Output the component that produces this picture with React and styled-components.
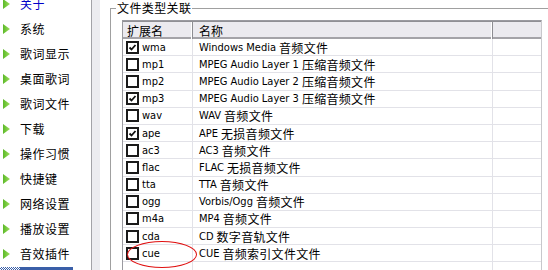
import React from "react";
import styled, { createGlobalStyle } from "styled-components";

const Global = createGlobalStyle`
  html, body { margin: 0; padding: 0; background: #fff; }
  body { font-family: "Liberation Sans", "Noto Sans CJK SC", sans-serif; font-size: 12px; color: #000; }
`;

const Page = styled.div`
  display: flex;
  width: 548px;
  height: 270px;
  overflow: hidden;
  position: relative;
`;

const Nav = styled.div`
  width: 91px;
  flex: none;
  background: #fff;
  border-right: 1px solid #a3a3a8;
  overflow: hidden;
`;

const NavList = styled.ul`
  list-style: none;
  margin: -9px 0 0 0;
  padding: 0;
`;

const NavItem = styled.li`
  display: flex;
  align-items: center;
  height: 25px;
  gap: 10px;
  padding-left: 3px;
  color: ${(p) => (p.$active ? "#0000c8" : "#000")};
  font-family: "Noto Sans CJK SC", sans-serif;
  font-size: 12px;
  letter-spacing: 0.5px;
`;

const SelectedRow = styled.li`
  display: flex;
  height: 25px;
  margin-top: 0.5px;
`;

const Dither = styled.div`
  width: 20px;
  background-color: #fff;
  background-image: repeating-conic-gradient(#3a5fa8 0 25%, #fff 0 50%);
  background-size: 2px 2px;
`;

const BlueBar = styled.div`
  width: 53px;
  background: #3a5fa8;
`;

const Strip = styled.div`
  width: 8px;
  flex: none;
  background: #ececf0;
`;

const Main = styled.div`
  flex: 1;
  background: #fff;
  padding-left: 10px;
`;

const Group = styled.fieldset`
  margin: 1px 0 0 0;
  padding: 0;
  border: none;
  border-top: 1px solid #a0a0a0;
  border-left: 1px solid #a0a0a0;
  min-width: 0;
  height: 300px;
`;

const Legend = styled.legend`
  margin-left: 5px;
  padding: 0 1px;
  font-family: "Noto Sans CJK SC", sans-serif;
  font-size: 12px;
  line-height: 14px;
  letter-spacing: 0.4px;
`;

const Table = styled.div`
  margin: 5px 0 0 11px;
  width: 418px;
  border-left: 1px solid #9a9aa0;
  border-right: 1px solid #c8c8cc;
  border-top: 1px solid #9a9aa0;
`;

const Header = styled.div`
  display: grid;
  grid-template-columns: 70px 300px 46px;
  height: 15px;
  background: #ebeaef;
  border-top: 1px solid #8f8f94;
  border-bottom: 2px solid #a4a3a8;
`;

const HeadCell = styled.div`
  display: flex;
  align-items: center;
  padding-left: ${(p) => p.$pad || 4}px;
  font-family: "Noto Sans CJK SC", sans-serif;
  font-size: 12px;
  border-right: 1px solid #8d8d92;
  box-shadow: inset -1px 0 0 #fff;
  &:last-child { border-right: none; box-shadow: none; }
`;

const Row = styled.div`
  display: grid;
  grid-template-columns: 70px 300px 46px;
  height: 17.2px;
  box-sizing: border-box;
  border-bottom: 1px solid #e2e2e8;
`;

const Cell = styled.div`
  display: flex;
  align-items: center;
  gap: 3px;
  padding-left: ${(p) => p.$pad || 0}px;
  border-right: 1px solid #e2e2e8;
  font-size: 11px;
  font-family: "DejaVu Sans Condensed", "DejaVu Sans", "Noto Sans CJK SC", sans-serif;
  white-space: nowrap;
  overflow: hidden;
  &:last-child { border-right: none; }
`;

const CnText = styled.span`
  font-family: "Noto Sans CJK SC", sans-serif;
  font-size: 12px;
  letter-spacing: 0.3px;
`;

const Box = styled.span`
  width: 13px;
  height: 13px;
  box-sizing: border-box;
  border: 2px solid #1a1a1a;
  background: #fff;
  display: inline-flex;
  align-items: center;
  justify-content: center;
  flex: none;
`;

const Ellipse = styled.div`
  position: absolute;
  left: 127px;
  top: 241px;
  width: 70px;
  height: 27px;
  border: 1px solid #e01010;
  border-radius: 50%;
  box-sizing: border-box;
  pointer-events: none;
`;

const Arrow = () => (
  <svg width="7" height="10" viewBox="0 0 7 10">
    <defs>
      <linearGradient id="ag" x1="0" y1="0" x2="1" y2="0">
        <stop offset="0" stopColor="#5cb82a" />
        <stop offset="1" stopColor="#9ce05a" />
      </linearGradient>
    </defs>
    <polygon points="0,0 7,5 0,10" fill="url(#ag)" />
  </svg>
);

const Check = () => (
  <svg width="9" height="9" viewBox="0 0 9 9">
    <polyline points="1.5,4.5 3.5,6.5 7.5,2" fill="none" stroke="#111" strokeWidth="1.8" />
  </svg>
);

const navItems = ["关于", "系统", "歌词显示", "桌面歌词", "歌词文件", "下载", "操作习惯", "快捷键", "网络设置", "播放设置", "音效插件"];

const rows = [
  ["wma", true, "Windows Media ", "音频文件"],
  ["mp1", false, "MPEG Audio Layer 1 ", "压缩音频文件"],
  ["mp2", false, "MPEG Audio Layer 2 ", "压缩音频文件"],
  ["mp3", true, "MPEG Audio Layer 3 ", "压缩音频文件"],
  ["wav", false, "WAV ", "音频文件"],
  ["ape", true, "APE ", "无损音频文件"],
  ["ac3", false, "AC3 ", "音频文件"],
  ["flac", false, "FLAC ", "无损音频文件"],
  ["tta", false, "TTA ", "音频文件"],
  ["ogg", false, "Vorbis/Ogg ", "音频文件"],
  ["m4a", false, "MP4 ", "音频文件"],
  ["cda", false, "CD ", "数字音轨文件"],
  ["cue", false, "CUE ", "音频索引文件文件"],
  ["", false, "", ""],
];

export default function App() {
  return (
    <>
      <Global />
      <Page>
        <Nav>
          <NavList>
            {navItems.map((t, i) => (
              <NavItem key={t} $active={i === 0}>
                <Arrow />
                <span>{t}</span>
              </NavItem>
            ))}
            <SelectedRow>
              <Dither />
              <BlueBar />
            </SelectedRow>
          </NavList>
        </Nav>
        <Strip />
        <Main>
          <Group>
            <Legend>文件类型关联</Legend>
            <Table>
              <Header>
                <HeadCell>扩展名</HeadCell>
                <HeadCell $pad={6}>名称</HeadCell>
                <HeadCell />
              </Header>
              {rows.map(([ext, checked, name, cn], i) => (
                <Row key={i}>
                  <Cell $pad={3}>
                    {ext && <Box>{checked && <Check />}</Box>}
                    {ext}
                  </Cell>
                  <Cell $pad={6}>
                    {name}
                    {cn && <CnText>{cn}</CnText>}
                  </Cell>
                  <Cell />
                </Row>
              ))}
            </Table>
          </Group>
        </Main>
        <Ellipse />
      </Page>
    </>
  );
}
